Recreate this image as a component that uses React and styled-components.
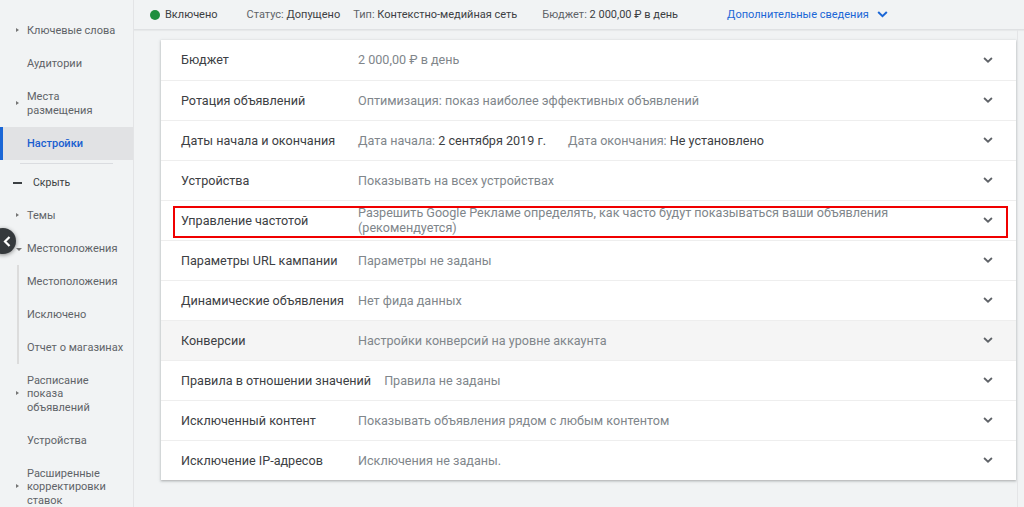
import React from "react";
import styled, { createGlobalStyle } from "styled-components";

const Global = createGlobalStyle`
  html, body { margin: 0; padding: 0; }
  body {
    font-family: Roboto, "Noto Sans", Arial, sans-serif;
    background: #f1f3f4;
    width: 1024px;
    height: 507px;
    overflow: hidden;
  }
`;

const Page = styled.div`
  display: flex;
  width: 1024px;
  height: 507px;
  position: relative;
  overflow: hidden;
`;

const Sidebar = styled.nav`
  flex: 0 0 133px;
  background: #f1f3f4;
  border-right: 1px solid #e3e4e6;
  padding-top: 14.5px;
  display: flex;
  flex-direction: column;
  position: relative;
  & > * {
    flex-shrink: 0;
  }
`;

const NavItem = styled.div`
  position: relative;
  flex-shrink: 0;
  padding: 9.75px 4px 9.75px 27px;
  font-size: 11px;
  line-height: 13.5px;
  color: ${p => (p.$active ? "#1a5fd0" : "#5f6368")};
  background: ${p => (p.$active ? "#e1e2e4" : "transparent")};
  font-weight: ${p => (p.$active ? 500 : 400)};
  display: flex;
  align-items: center;
  &::before {
    content: "";
    position: absolute;
    left: 0;
    top: 0;
    bottom: 0;
    width: 3px;
    background: ${p => (p.$active ? "#1a66d6" : "transparent")};
  }
`;

const Caret = styled.span`
  position: absolute;
  left: 16px;
  top: 50%;
  width: 0;
  height: 0;
  ${p =>
    p.$down
      ? `border-left: 3px solid transparent; border-right: 3px solid transparent; border-top: 3px solid #757575; margin-top: -1px;`
      : `border-top: 2.5px solid transparent; border-bottom: 2.5px solid transparent; border-left: 3px solid #757575; margin-top: -3px;`}
`;

const Divider = styled.div`
  height: 1px;
  background: #dadce0;
  margin: 3px 20px 2px 20px;
`;

const HideRow = styled.div`
  display: flex;
  align-items: center;
  height: 33px;
  padding-left: 13px;
  font-size: 10.5px;
  color: #3c4043;
  gap: 11px;
`;

const Dash = styled.span`
  width: 9px;
  height: 2px;
  background: #3c4043;
`;

const SubGroup = styled.div`
  margin-left: 17px;
  border-left: 2px solid #dcdcdc;
  display: flex;
  flex-direction: column;
  & > div {
    padding-left: 8px;
  }
`;

const CollapseBtn = styled.div`
  position: absolute;
  left: -10px;
  top: 228px;
  width: 26px;
  height: 26px;
  border-radius: 50%;
  background: #35393c;
  box-shadow: 0 1px 4px rgba(0,0,0,0.45);
  display: flex;
  align-items: center;
  justify-content: flex-end;
  padding-right: 5px;
  box-sizing: border-box;
  z-index: 3;
`;

const Main = styled.main`
  flex: 1;
  display: flex;
  flex-direction: column;
  min-width: 0;
`;

const Header = styled.header`
  height: 30px;
  flex: 0 0 30px;
  box-sizing: border-box;
  border-bottom: 1px solid #dfe1e3;
  display: flex;
  align-items: center;
  padding-left: 16px;
  font-size: 11px;
  color: #5f6368;
  background: #f1f3f4;
  box-shadow: 0 1px 1px rgba(0,0,0,0.04);
`;

const HeadItem = styled.span`
  display: inline-flex;
  align-items: center;
  margin-right: ${p => p.$mr || 0}px;
  color: ${p => p.$color || "#5f6368"};
  white-space: nowrap;
`;

const Strong = styled.span`
  color: #3c4043;
`;

const Dot = styled.span`
  width: 10px;
  height: 10px;
  border-radius: 50%;
  background: #1e8e3e;
  margin-right: 5px;
`;

const Body = styled.div`
  flex: 1;
  display: flex;
  padding: 10px 0 0 27px;
`;

const Card = styled.section`
  width: 855px;
  align-self: flex-start;
  background: #fff;
  box-shadow: 0 1px 2px rgba(60,64,67,0.3), 0 1px 3px 1px rgba(60,64,67,0.1);
  display: flex;
  flex-direction: column;
`;

const Scroll = styled.div`
  flex: 1;
  margin-left: 1px;
  border-left: 1px solid #e4e5e7;
  margin-top: -10px;
`;

const Row = styled.div`
  position: relative;
  height: 40px;
  box-sizing: border-box;
  display: flex;
  align-items: center;
  padding: 0 23px 1px 20px;
  background: ${p => (p.$grey ? "#f5f5f5" : "#fff")};
  & + & {
    border-top: 1px solid #eeeeee;
  }
`;

const Label = styled.div`
  flex: 0 0 auto;
  min-width: 164px;
  margin-right: 13px;
  font-size: 12.6px;
  color: #3c4043;
  white-space: nowrap;
`;

const Value = styled.div`
  flex: 1;
  font-size: 12.6px;
  line-height: 15px;
  color: #80868b;
  padding-right: 70px;
`;

const Dark = styled.span`
  color: #3c4043;
`;

const Gap = styled.span`
  display: inline-block;
  width: 22px;
`;

const Highlight = styled.div`
  position: absolute;
  left: 12px;
  right: 8px;
  top: 5px;
  bottom: 2px;
  border: 2px solid #f00000;
  pointer-events: none;
`;

const Chevron = ({ color = "#5f6368", w = 10 }) => (
  <svg width={w} height={w * 0.6} viewBox="0 0 12 7.2" style={{ flex: "0 0 auto" }}>
    <path d="M1.3 1.2 L6 5.6 L10.7 1.2" fill="none" stroke={color} strokeWidth="2.2" />
  </svg>
);

const rows = [
  { l: "Бюджет", v: "2 000,00 ₽ в день" },
  { l: "Ротация объявлений", v: "Оптимизация: показ наиболее эффективных объявлений" },
  {
    l: "Даты начала и окончания",
    v: (
      <>
        Дата начала: <Dark>2 сентября 2019 г.</Dark>
        <Gap />
        Дата окончания: <Dark>Не установлено</Dark>
      </>
    ),
  },
  { l: "Устройства", v: "Показывать на всех устройствах" },
  {
    l: "Управление частотой",
    v: "Разрешить Google Рекламе определять, как часто будут показываться ваши объявления (рекомендуется)",
    hl: true,
  },
  { l: "Параметры URL кампании", v: "Параметры не заданы" },
  { l: "Динамические объявления", v: "Нет фида данных" },
  { l: "Конверсии", v: "Настройки конверсий на уровне аккаунта", grey: true },
  { l: "Правила в отношении значений", v: "Правила не заданы" },
  { l: "Исключенный контент", v: "Показывать объявления рядом с любым контентом" },
  { l: "Исключение IP-адресов", v: "Исключения не заданы." },
];

export default function App() {
  return (
    <>
      <Global />
      <Page>
        <Sidebar>
          <NavItem><Caret />Ключевые слова</NavItem>
          <NavItem>Аудитории</NavItem>
          <NavItem><Caret />Места<br />размещения</NavItem>
          <NavItem $active>Настройки</NavItem>
          <Divider />
          <HideRow><Dash />Скрыть</HideRow>
          <NavItem><Caret />Темы</NavItem>
          <NavItem><Caret $down />Местоположения</NavItem>
          <SubGroup>
            <NavItem>Местоположения</NavItem>
            <NavItem>Исключено</NavItem>
            <NavItem>Отчет о магазинах</NavItem>
          </SubGroup>
          <NavItem><Caret />Расписание<br />показа<br />объявлений</NavItem>
          <NavItem>Устройства</NavItem>
          <NavItem><Caret />Расширенные<br />корректировки<br />ставок</NavItem>
        </Sidebar>
        <CollapseBtn>
          <svg width="8" height="11" viewBox="0 0 8 11">
            <path d="M6.5 1 L2 5.5 L6.5 10" fill="none" stroke="#fff" strokeWidth="2.2" />
          </svg>
        </CollapseBtn>
        <Main>
          <Header>
            <HeadItem $mr={29} $color="#3c4043"><Dot />Включено</HeadItem>
            <HeadItem $mr={13}>Статус:&nbsp;<Strong>Допущено</Strong></HeadItem>
            <HeadItem $mr={25}>Тип:&nbsp;<Strong>Контекстно-медийная сеть</Strong></HeadItem>
            <HeadItem $mr={49}>Бюджет:&nbsp;<Strong>2 000,00 ₽ в день</Strong></HeadItem>
            <HeadItem $color="#1a66d6">
              Дополнительные сведения
              <span style={{ marginLeft: 8, display: "inline-flex" }}>
                <Chevron color="#1a66d6" w={11} />
              </span>
            </HeadItem>
          </Header>
          <Body>
            <Card>
              {rows.map((r, i) => (
                <Row key={i} $grey={r.grey}>
                  <Label>{r.l}</Label>
                  <Value>{r.v}</Value>
                  <Chevron />
                  {r.hl && <Highlight />}
                </Row>
              ))}
            </Card>
            <Scroll />
          </Body>
        </Main>
      </Page>
    </>
  );
}
